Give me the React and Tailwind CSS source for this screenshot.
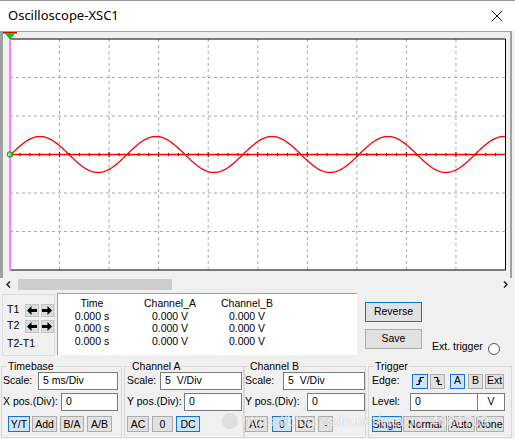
import { X } from 'lucide-react';

// plot geometry, local to the svg (svg sits at page x=3, y=32)
const X0 = 7;
const X1 = 502.5;
const Y0 = 7;
const Y1 = 238;
const YC = 122.5;

function sinePath() {
  const pts = [];
  for (let x = X0; x <= X1; x += 1) {
    const gx = x + 3;
    const y = YC - 18 * Math.sin((2 * Math.PI * (gx - 11)) / 116);
    pts.push(`${x.toFixed(1)},${y.toFixed(2)}`);
  }
  return 'M' + pts.join(' L');
}

function Screen() {
  const dx = (X1 - X0) / 10;
  const dy = (Y1 - Y0) / 6;
  const ticks = [];
  for (let i = 0; i <= 50; i++) {
    const x = X0 + (i * (X1 - X0)) / 50;
    const h = i % 5 === 0 ? 2.5 : 1.5;
    ticks.push(<line key={i} x1={x} x2={x} y1={YC - h} y2={YC + h} stroke="#000" strokeWidth="1" />);
  }
  return (
    <svg width="507" height="239" className="block">
      <rect x={X0} y={Y0} width={X1 - X0} height={Y1 - Y0} fill="#fff" />
      {[1, 2, 3, 4, 5, 6, 7, 8, 9].map((k) => (
        <line key={'v' + k} x1={X0 + k * dx} x2={X0 + k * dx} y1={Y0} y2={Y1} stroke="#a8a8a8" strokeDasharray="3 3" strokeWidth="1" />
      ))}
      {[1, 2, 4, 5].map((k) => (
        <line key={'h' + k} x1={X0} x2={X1} y1={Y0 + k * dy} y2={Y0 + k * dy} stroke="#a8a8a8" strokeDasharray="3 3" strokeWidth="1" />
      ))}
      <line x1={X0} x2={X1} y1={Y0} y2={Y0} stroke="#000" strokeWidth="1" />
      <line x1={X0} x2={X1} y1={Y1} y2={Y1} stroke="#000" strokeWidth="1" />
      <line x1={X1} x2={X1} y1={Y0} y2={Y1} stroke="#000" strokeWidth="1" />
      <line x1={X0} x2={X1} y1={YC} y2={YC} stroke="#000" strokeWidth="1" />
      {ticks}
      <line x1={X0} x2={X1} y1={YC} y2={YC} stroke="#ff0000" strokeWidth="1.3" />
      <path d={sinePath()} fill="none" stroke="#ff0000" strokeWidth="1.3" />
      <line x1={X0} x2={X0} y1={Y0} y2={239} stroke="#ff80ff" strokeWidth="2" />
      <circle cx={X0} cy={YC} r="2.6" fill="none" stroke="#00c000" strokeWidth="1.2" />
      <rect x="0" y="0" width="14" height="1.6" fill="#e00000" />
      <polygon points="2,1.6 12,1.6 7,7.5" fill="#00c800" />
    </svg>
  );
}

function Arrow({ right }) {
  return (
    <div className="w-[14px] h-[13px] bg-[#dcdcdc] border border-[#c4c4c4] flex items-center justify-center">
      <svg width="10" height="9" viewBox="0 0 10 9" style={right ? { transform: 'scaleX(-1)' } : undefined}>
        <polygon points="0,4.5 4.5,0 4.5,3 10,3 10,6 4.5,6 4.5,9" fill="#000" />
      </svg>
    </div>
  );
}

function Btn({ active, className = '', children }) {
  return (
    <div
      className={`h-[16px] flex items-center justify-center border text-[10.5px] leading-none ${
        active ? 'bg-[#cce4f7] border-[#1a73c9]' : 'bg-[#e1e1e1] border-[#adadad]'
      } ${className}`}
    >
      {children}
    </div>
  );
}

function Field({ className = '', children }) {
  return (
    <div className={`h-[18px] bg-white border border-[#7a7a7a] flex items-center pl-[4px] text-[10.5px] ${className}`}>
      {children}
    </div>
  );
}

function Row({ label, className = '', children }) {
  return (
    <div className={`flex items-center h-[18px] ${className}`}>
      <span className="text-[10.5px] whitespace-nowrap">{label}</span>
      {children}
    </div>
  );
}

export default function App() {
  return (
    <div className="w-[515px] h-[439px] bg-[#f0f0f0] flex flex-col overflow-hidden relative font-['Liberation_Sans',Arial,sans-serif] text-black">
      {/* title bar */}
      <div className="h-[31px] shrink-0 bg-white border-t border-[#9a9a9a] flex items-center justify-between pl-[8px] pr-[8px]">
        <span className="font-['Noto_Sans',sans-serif] text-[13px]">Oscilloscope-XSC1</span>
        <X size={20} strokeWidth={1.1} />
      </div>

      {/* screen */}
      <div className="w-[512px] h-[247px] shrink-0 border-l-[3px] border-r-[2px] border-t border-[#a0a0a0]">
        <Screen />
      </div>

      {/* scrollbar */}
      <div className="h-[13px] shrink-0 flex items-center">
        <svg width="5" height="7" viewBox="0 0 5 7" className="ml-[6px]">
          <polyline points="4,0.5 1,3.5 4,6.5" fill="none" stroke="#222" strokeWidth="1.5" />
        </svg>
        <div className="ml-[7px] w-[154px] h-[11px] bg-[#cdcdcd]" />
        <div className="flex-1" />
        <svg width="5" height="7" viewBox="0 0 5 7" className="mr-[7px]">
          <polyline points="1,0.5 4,3.5 1,6.5" fill="none" stroke="#222" strokeWidth="1.5" />
        </svg>
      </div>

      {/* cursor readout row */}
      <div className="h-[69px] shrink-0 flex text-[10.5px]">
        <div className="ml-[2px] mt-[3px] w-[53px] h-[62px] border border-[#dcdcdc] pl-[4px] pt-[8px]">
          <div className="flex items-center h-[14px]">
            <span className="w-[19px]">T1</span>
            <Arrow />
            <div className="w-[2px]" />
            <Arrow right />
          </div>
          <div className="flex items-center h-[14px] mt-[2px]">
            <span className="w-[19px]">T2</span>
            <Arrow />
            <div className="w-[2px]" />
            <Arrow right />
          </div>
          <div className="mt-[3px] leading-[14px]">T2-T1</div>
        </div>

        <div className="ml-[2px] mt-[2px] w-[300px] h-[62px] bg-white border-t border-l border-[#a0a0a0] border-b-[#ffffff] border-r-[#ffffff] pt-[3px]">
          <div className="grid grid-cols-[68px_88px_66px] text-center leading-[12.6px]">
            <span>Time</span>
            <span>Channel_A</span>
            <span>Channel_B</span>
            <span>0.000 s</span>
            <span>0.000 V</span>
            <span>0.000 V</span>
            <span>0.000 s</span>
            <span>0.000 V</span>
            <span>0.000 V</span>
            <span>0.000 s</span>
            <span>0.000 V</span>
            <span>0.000 V</span>
          </div>
        </div>

        <div className="ml-[8px] w-[57px] flex flex-col">
          <div className="mt-[11px] h-[20px] flex items-center justify-center bg-[#e1e1e1] border border-[#0078d7]">Reverse</div>
          <div className="mt-[7px] h-[20px] flex items-center justify-center bg-[#e1e1e1] border border-[#adadad]">Save</div>
        </div>

        <div className="ml-[10px] flex items-end pb-[5px]">
          <span>Ext. trigger</span>
          <div className="ml-[5px] w-[12px] h-[12px] rounded-full bg-white border border-[#555]" />
        </div>
      </div>

      {/* control groups */}
      <div className="flex">
        <fieldset className="ml-[1px] w-[121px] h-[78px] border border-[#d8d8d8] pl-[1px] pr-[3px]">
          <legend className="ml-[4px] px-[1px] text-[10.5px] leading-[12px]">Timebase</legend>
          <Row label="Scale:">
            <Field className="ml-auto w-[80px]">5 ms/Div</Field>
          </Row>
          <Row label="X pos.(Div):" className="mt-[3px]">
            <Field className="ml-auto w-[57px]">0</Field>
          </Row>
          <div className="flex mt-[5px]">
            <Btn active className="ml-[5px] w-[22px]">Y/T</Btn>
            <Btn className="ml-[2px] w-[25px]">Add</Btn>
            <Btn className="ml-[3px] w-[24px]">B/A</Btn>
            <Btn className="ml-[3px] w-[25px]">A/B</Btn>
          </div>
        </fieldset>

        <fieldset className="ml-[2px] w-[120px] h-[78px] border border-[#d8d8d8] pl-[2px] pr-[1px]">
          <legend className="ml-[4px] px-[1px] text-[10.5px] leading-[12px]">Channel A</legend>
          <Row label="Scale:">
            <Field className="ml-auto w-[82px]">5&nbsp;&nbsp;V/Div</Field>
          </Row>
          <Row label="Y pos.(Div):" className="mt-[3px]">
            <Field className="ml-auto w-[58px]">0</Field>
          </Row>
          <div className="flex mt-[5px]">
            <Btn className="w-[22px]">AC</Btn>
            <Btn className="ml-[3px] w-[21px]">0</Btn>
            <Btn active className="ml-[3px] w-[24px]">DC</Btn>
          </div>
        </fieldset>

        <fieldset className="w-[122px] h-[78px] border border-[#d8d8d8] pl-0 pr-0">
          <legend className="ml-[4px] px-[1px] text-[10.5px] leading-[12px]">Channel B</legend>
          <Row label="Scale:">
            <Field className="ml-auto w-[82px]">5&nbsp;&nbsp;V/Div</Field>
          </Row>
          <Row label="Y pos.(Div):" className="mt-[3px]">
            <Field className="ml-auto w-[58px]">0</Field>
          </Row>
          <div className="flex mt-[5px]">
            <Btn className="w-[23px]">AC</Btn>
            <Btn active className="ml-[4px] w-[20px]">0</Btn>
            <Btn className="ml-[3px] w-[20px]">DC</Btn>
            <Btn className="ml-[3px] w-[15px]">-</Btn>
          </div>
        </fieldset>

        <fieldset className="ml-[2px] w-[144px] h-[78px] border border-[#d8d8d8] pl-[3px] pr-[6px]">
          <legend className="ml-[2px] px-[1px] text-[10.5px] leading-[12px]">Trigger</legend>
          <div className="flex items-center h-[18px]">
            <span className="w-[40px] text-[10.5px]">Edge:</span>
            <div className="h-[15px] w-[16px] bg-[#cce4f7] border border-[#1a73c9] flex items-center justify-center">
              <svg width="10" height="10" viewBox="0 0 10 10">
                <polyline points="1,8.5 4,8.5 5.5,1.5 9,1.5" fill="none" stroke="#000" strokeWidth="1.2" />
                <line x1="3" y1="5" x2="7" y2="5" stroke="#000" strokeWidth="1.1" />
              </svg>
            </div>
            <div className="ml-[2px] h-[15px] w-[15px] bg-[#e1e1e1] border border-[#adadad] flex items-center justify-center">
              <svg width="10" height="10" viewBox="0 0 10 10">
                <polyline points="1,1.5 4.5,1.5 5.5,8.5 9,8.5" fill="none" stroke="#000" strokeWidth="1.2" />
                <line x1="3" y1="5" x2="7" y2="5" stroke="#000" strokeWidth="1.1" />
              </svg>
            </div>
            <div className="ml-[5px] h-[15px] w-[15px] bg-[#cce4f7] border border-[#1a73c9] flex items-center justify-center text-[10.5px]">A</div>
            <div className="ml-[3px] h-[15px] w-[15px] bg-[#e1e1e1] border border-[#adadad] flex items-center justify-center text-[10.5px]">B</div>
            <div className="ml-[2px] h-[15px] w-[19px] bg-[#e1e1e1] border border-[#adadad] flex items-center justify-center text-[10.5px]">Ext</div>
          </div>
          <div className="flex items-center h-[18px] mt-[3px]">
            <span className="w-[38px] text-[10.5px]">Level:</span>
            <Field className="w-[68px]">0</Field>
            <div className="h-[18px] w-[27px] bg-white border border-l-0 border-[#7a7a7a] flex items-center justify-center text-[10.5px]">V</div>
          </div>
          <div className="flex mt-[5px]">
            <Btn active className="w-[30px]">Single</Btn>
            <Btn className="ml-[1px] w-[44px]">Normal</Btn>
            <Btn className="ml-[1px] w-[27px]">Auto</Btn>
            <Btn className="ml-[1px] w-[28px]">None</Btn>
          </div>
        </fieldset>
      </div>

      {/* blog watermark */}
      <div className="absolute left-[222px] top-[410px] flex items-center gap-[4px] text-[15px] text-white opacity-70 pointer-events-none [text-shadow:0_0_1px_#888]">
        <div className="w-[16px] h-[16px] rounded-full bg-[#d8d8d8]" />
        <span>https://blog.csdn.net/weixin_4681709</span>
      </div>
    </div>
  );
}
